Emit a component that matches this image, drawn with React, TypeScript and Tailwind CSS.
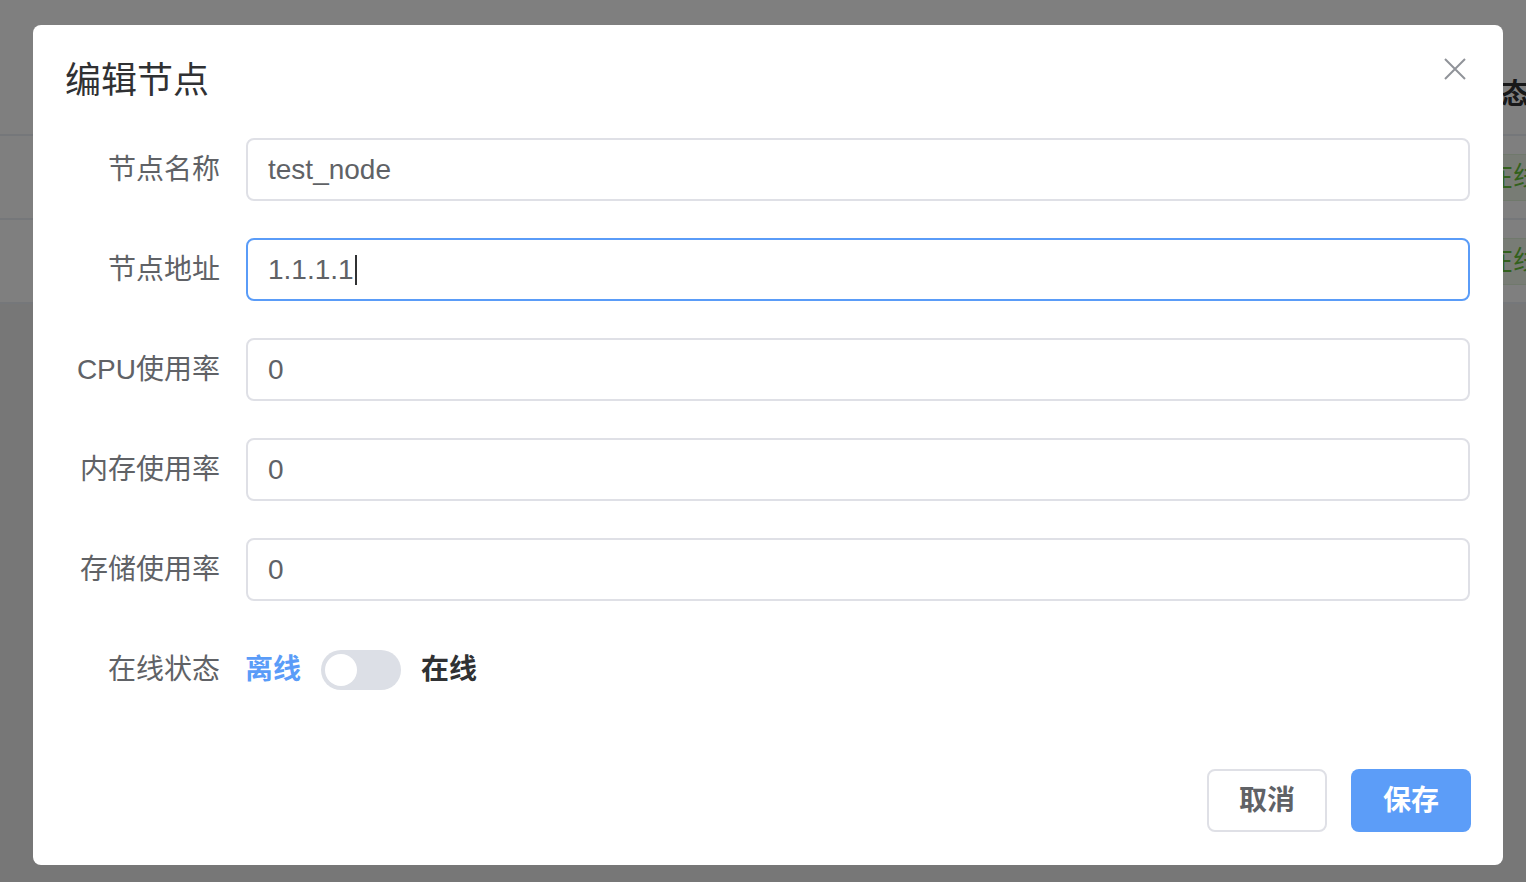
const font = { fontFamily: '"Liberation Sans", "Noto Sans CJK SC", sans-serif' };

interface FieldProps {
  label: string;
  value: string;
  focused?: boolean;
}

function Field({ label, value, focused }: FieldProps) {
  return (
    <div className="flex items-center h-[63px] mb-[37px]">
      <div className="w-[180px] pr-[26px] text-right text-[28px] text-[#606266] shrink-0">{label}</div>
      <div
        className={`flex-1 h-[63px] flex items-center pl-[20px] rounded-[8px] border-2 text-[28px] text-[#606266] ${
          focused ? "border-[#5a9cf8]" : "border-[#dfe0e6]"
        }`}
      >
        <span>{value}</span>
        {focused && <span className="ml-[1px] w-[2px] h-[30px] bg-[#303133]" />}
      </div>
    </div>
  );
}

function BackgroundPage() {
  return (
    <div className="w-full h-full bg-[#eeeeee]">
      <div className="bg-white">
        <div className="h-[136px] border-b-2 border-[#ebeef5] flex items-center justify-end pt-[56px]">
          <span className="text-[28px] font-bold text-[#303133] mr-[-3px]">状态</span>
        </div>
        {[0, 1].map((i) => (
          <div key={i} className="h-[84px] border-b-2 border-[#ebeef5] flex items-center justify-end">
            <span className="h-[47px] px-[12px] flex items-center mr-[-27px] bg-[#f0f9eb] border border-[#e1f3d8] rounded-[6px] text-[27px] text-[#67c23a]">
              在线
            </span>
          </div>
        ))}
      </div>
    </div>
  );
}

export default function App() {
  return (
    <div className="relative w-full h-[882px] overflow-hidden" style={font}>
      <BackgroundPage />
      <div className="absolute inset-0 bg-black/50" />
      <div className="absolute left-[33px] top-[25px] w-[1470px] h-[840px] bg-white rounded-[8px] flex flex-col">
        <div className="px-[32px] pt-[33px] h-[113px]">
          <h2 className="text-[36px] leading-[46px] text-[#303133]">编辑节点</h2>
        </div>
        <button className="absolute top-[33px] right-[37px] w-[22px] h-[22px]">
          <svg width="22" height="22" viewBox="0 0 22 22">
            <path d="M1 1 L21 21 M21 1 L1 21" stroke="#909399" strokeWidth="2" fill="none" />
          </svg>
        </button>
        <div className="px-[33px]">
          <Field label="节点名称" value="test_node" />
          <Field label="节点地址" value="1.1.1.1" focused />
          <Field label="CPU使用率" value="0" />
          <Field label="内存使用率" value="0" />
          <Field label="存储使用率" value="0" />
          <div className="flex items-center h-[63px]">
            <div className="w-[180px] pr-[26px] text-right text-[28px] text-[#606266] shrink-0">在线状态</div>
            <span className="ml-[-1px] text-[28px] font-bold text-[#5a9cf8]">离线</span>
            <div className="ml-[20px] w-[80px] h-[40px] rounded-full bg-[#dcdfe6] flex items-center px-[4px]">
              <div className="w-[32px] h-[32px] rounded-full bg-white" />
            </div>
            <span className="ml-[20px] text-[28px] font-bold text-[#303133]">在线</span>
          </div>
        </div>
        <div className="mt-auto px-[32px] pb-[33px] flex justify-end gap-[24px]">
          <button className="w-[120px] h-[63px] rounded-[8px] border-2 border-[#dfe0e6] bg-white text-[28px] font-bold text-[#606266]">
            取消
          </button>
          <button className="w-[120px] h-[63px] rounded-[8px] bg-[#5c9df8] text-[28px] font-bold text-white">
            保存
          </button>
        </div>
      </div>
    </div>
  );
}
